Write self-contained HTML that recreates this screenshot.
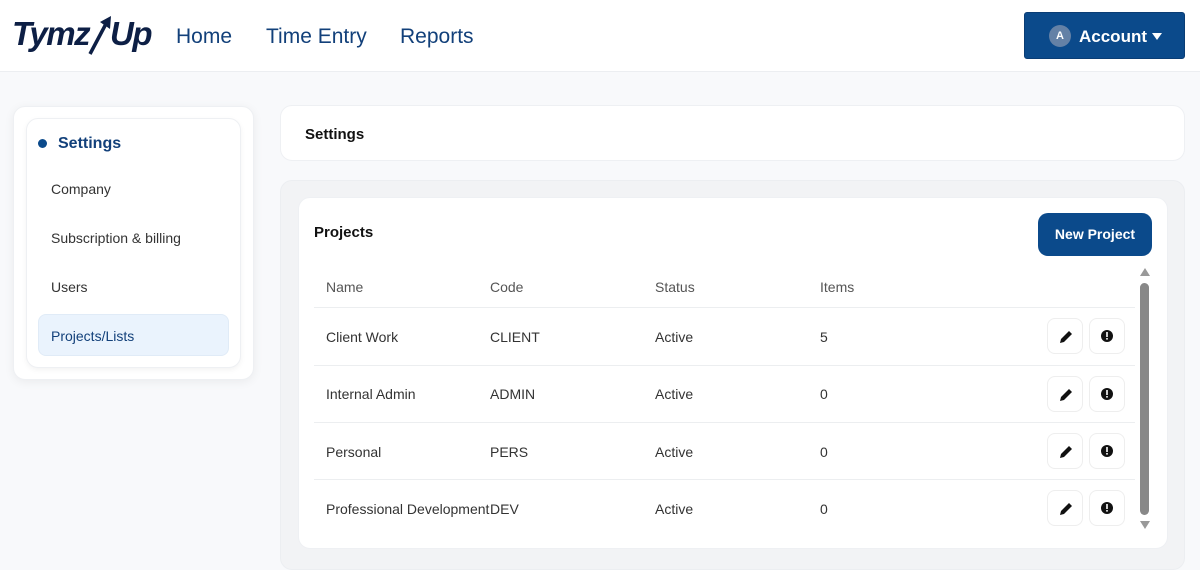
<!DOCTYPE html>
<html><head><meta charset="utf-8"><style>
*{box-sizing:border-box;margin:0;padding:0}
body{width:1200px;height:559px;overflow:hidden;background:#f8f9fb;font-family:"Liberation Sans",sans-serif;position:relative;color:#222}
.hdr{position:absolute;left:0;top:0;width:1200px;height:72px;background:#fff;border-bottom:1px solid #eceef1}
.logo{position:absolute;top:15px;font-size:33px;font-weight:bold;font-style:italic;color:#0d1f45;letter-spacing:-1.5px}
.nav{position:absolute;top:25px;font-size:21px;color:#12407a}
.acct{position:absolute;left:1024px;top:12px;width:161px;height:47px;background:#0b4a8b;border-radius:3px;border:1px solid #0a3d75;color:#fff;font-weight:bold;font-size:17px}
.av{position:absolute;left:24px;top:12px;width:22px;height:22px;border-radius:50%;background:#6481a6;font-size:11px;text-align:center;line-height:22px}
.card{position:absolute;background:#fff;border-radius:12px}
.side{left:13px;top:106px;width:241px;height:274px;box-shadow:0 2px 10px rgba(0,0,0,.06);border:1px solid #eef0f3}
.sidein{left:26px;top:118px;width:215px;height:250px;border:1px solid #eef0f3;box-shadow:0 2px 6px rgba(0,0,0,.05)}
.si{position:absolute;left:51px;font-size:14px;color:#333}
.t{position:absolute;font-size:14px;color:#333}
.th{position:absolute;top:279px;font-size:14px;color:#555}
.line{position:absolute;left:314px;width:821px;height:1px;background:#eceef0}
.ab{position:absolute;width:36px;height:36px;border:1px solid #eee;border-radius:8px;background:#fff}
</style></head><body>
<div class="hdr">
<div class="logo" style="left:12px">Tymz</div>
<svg style="position:absolute;left:86px;top:14px" width="30" height="42" viewBox="0 0 30 42"><path d="M4 40 L22 6" stroke="#0d1f45" stroke-width="3.5" fill="none"/><path d="M14 8 L25 2 L24 15 Z" fill="#0d1f45"/></svg>
<div class="logo" style="left:110px">Up</div>
<div class="nav" style="left:176px">Home</div>
<div class="nav" style="left:266px">Time Entry</div>
<div class="nav" style="left:400px">Reports</div>
<div class="acct"><div class="av">A</div><span style="position:absolute;left:54px;top:14px">Account</span><span style="position:absolute;left:127px;top:20px;width:0;height:0;border-left:5px solid transparent;border-right:5px solid transparent;border-top:7px solid #fff"></span></div>
</div>
<div class="card side"></div>
<div class="card sidein"></div>
<div style="position:absolute;left:38px;top:139px;width:9px;height:9px;border-radius:50%;background:#0b4a8b"></div>
<div style="position:absolute;left:58px;top:135px;font-size:16px;font-weight:bold;color:#12407a">Settings</div>
<div class="si" style="top:181px">Company</div>
<div class="si" style="top:230px">Subscription &amp; billing</div>
<div class="si" style="top:279px">Users</div>
<div style="position:absolute;left:38px;top:314px;width:191px;height:42px;background:#eaf3fd;border-radius:8px;border:1px solid #e0ebf7"></div>
<div class="si" style="top:328px;color:#12407a">Projects/Lists</div>
<div class="card" style="left:280px;top:105px;width:905px;height:56px;border:1px solid #eef0f3"></div>
<div style="position:absolute;left:305px;top:126px;font-size:15px;font-weight:bold;color:#111">Settings</div>
<div style="position:absolute;left:280px;top:180px;width:905px;height:390px;background:#f2f3f5;border-radius:12px;border:1px solid #eceef1"></div>
<div class="card" style="left:298px;top:197px;width:870px;height:352px;border:1px solid #eef0f3"></div>
<div style="position:absolute;left:314px;top:224px;font-size:15px;font-weight:bold;color:#111">Projects</div>
<div style="position:absolute;left:1038px;top:213px;width:114px;height:43px;background:#0b4a8b;border-radius:10px;color:#fff;font-weight:bold;font-size:14px;text-align:center;line-height:43px">New Project</div>
<div class="th" style="left:326px">Name</div><div class="th" style="left:490px">Code</div><div class="th" style="left:655px">Status</div><div class="th" style="left:820px">Items</div>
<div class="line" style="top:307px"></div><div class="line" style="top:365px"></div><div class="line" style="top:422px"></div><div class="line" style="top:479px"></div>
<div class="t" style="left:326px;top:329px">Client Work</div><div class="t" style="left:490px;top:329px">CLIENT</div><div class="t" style="left:655px;top:329px">Active</div><div class="t" style="left:820px;top:329px">5</div>
<div class="t" style="left:326px;top:386px">Internal Admin</div><div class="t" style="left:490px;top:386px">ADMIN</div><div class="t" style="left:655px;top:386px">Active</div><div class="t" style="left:820px;top:386px">0</div>
<div class="t" style="left:326px;top:444px">Personal</div><div class="t" style="left:490px;top:444px">PERS</div><div class="t" style="left:655px;top:444px">Active</div><div class="t" style="left:820px;top:444px">0</div>
<div class="t" style="left:326px;top:501px">Professional Development</div><div class="t" style="left:490px;top:501px">DEV</div><div class="t" style="left:655px;top:501px">Active</div><div class="t" style="left:820px;top:501px">0</div>
<div style="position:absolute;left:1140px;top:268px;width:0;height:0;border-left:5px solid transparent;border-right:5px solid transparent;border-bottom:8px solid #999"></div>
<div style="position:absolute;left:1140px;top:283px;width:9px;height:232px;background:#888;border-radius:5px"></div>
<div style="position:absolute;left:1140px;top:521px;width:0;height:0;border-left:5px solid transparent;border-right:5px solid transparent;border-top:8px solid #999"></div>
<div class="ab" style="left:1047px;top:318px"><svg width="36" height="36" viewBox="0 0 36 36"><path d="M12 24l1-4 8-8 3 3-8 8z" fill="#111"/></svg></div>
<div class="ab" style="left:1089px;top:318px"><svg width="36" height="36" viewBox="0 0 36 36"><circle cx="17" cy="17" r="6" fill="#111"/><rect x="16.2" y="13" width="1.6" height="5" fill="#fff"/><rect x="16.2" y="19" width="1.6" height="1.6" fill="#fff"/></svg></div>
<div class="ab" style="left:1047px;top:376px"><svg width="36" height="36" viewBox="0 0 36 36"><path d="M12 24l1-4 8-8 3 3-8 8z" fill="#111"/></svg></div>
<div class="ab" style="left:1089px;top:376px"><svg width="36" height="36" viewBox="0 0 36 36"><circle cx="17" cy="17" r="6" fill="#111"/><rect x="16.2" y="13" width="1.6" height="5" fill="#fff"/><rect x="16.2" y="19" width="1.6" height="1.6" fill="#fff"/></svg></div>
<div class="ab" style="left:1047px;top:433px"><svg width="36" height="36" viewBox="0 0 36 36"><path d="M12 24l1-4 8-8 3 3-8 8z" fill="#111"/></svg></div>
<div class="ab" style="left:1089px;top:433px"><svg width="36" height="36" viewBox="0 0 36 36"><circle cx="17" cy="17" r="6" fill="#111"/><rect x="16.2" y="13" width="1.6" height="5" fill="#fff"/><rect x="16.2" y="19" width="1.6" height="1.6" fill="#fff"/></svg></div>
<div class="ab" style="left:1047px;top:490px"><svg width="36" height="36" viewBox="0 0 36 36"><path d="M12 24l1-4 8-8 3 3-8 8z" fill="#111"/></svg></div>
<div class="ab" style="left:1089px;top:490px"><svg width="36" height="36" viewBox="0 0 36 36"><circle cx="17" cy="17" r="6" fill="#111"/><rect x="16.2" y="13" width="1.6" height="5" fill="#fff"/><rect x="16.2" y="19" width="1.6" height="1.6" fill="#fff"/></svg></div>
</body></html>
